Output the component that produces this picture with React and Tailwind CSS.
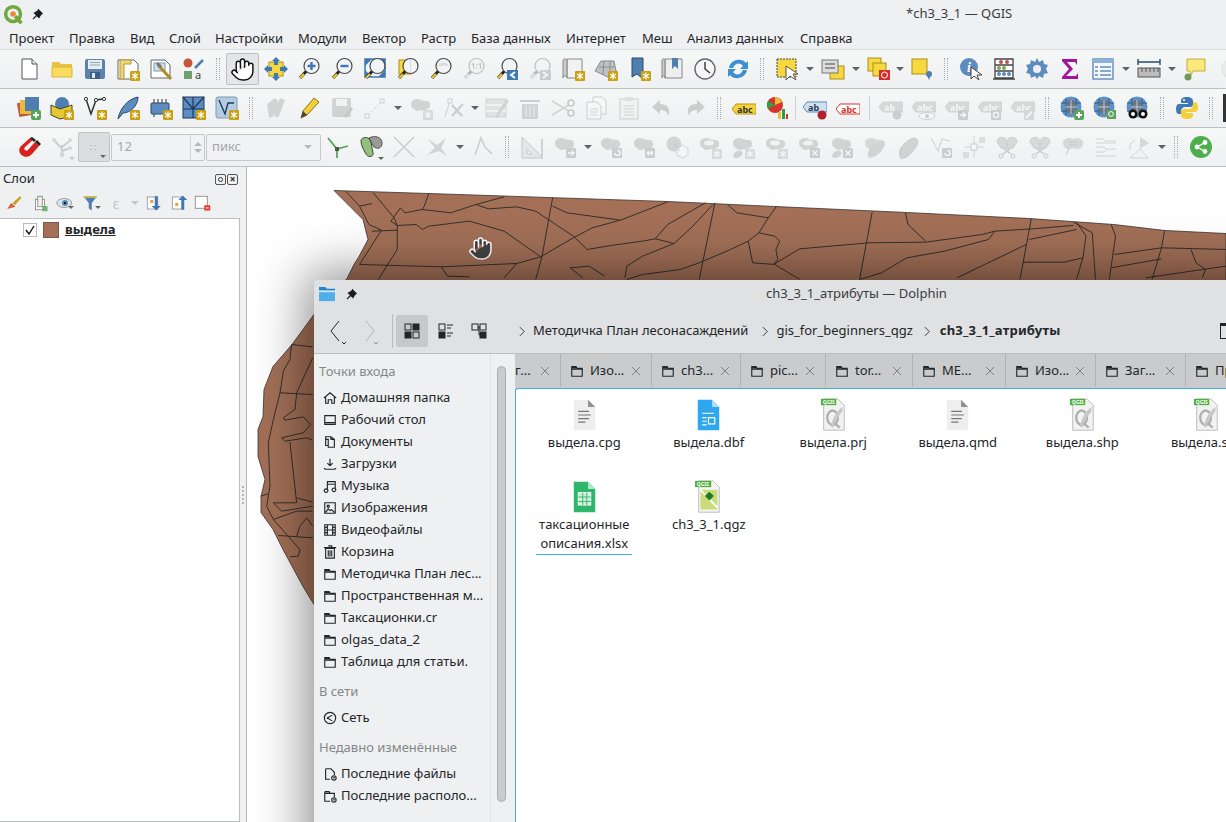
import { Hand } from "lucide-react";

// badges and parts shared by the toolbar icons
const Star = () => (
  <g>
    <rect x="14" y="14" width="10" height="10" rx="1" fill="#c9a012" />
    <path d="M19 15.5v7M16 17l6 4M22 17l-6 4" stroke="#fff" strokeWidth="1.2" />
  </g>
);
const Plus = () => (
  <g>
    <rect x="14" y="14" width="10" height="10" rx="2" fill="#5aa35a" />
    <path d="M19 16v6M16 19h6" stroke="#fff" strokeWidth="1.8" />
  </g>
);
const Lens = ({ children }) => (
  <g>
    <circle cx="14.5" cy="9" r="7.5" fill="#f1f3f4" stroke="#4a4a4a" strokeWidth="1.2" />
    {children}
    <path d="M9 14.5 3 21" stroke="#222" strokeWidth="3" />
    <path d="M7 17 3 21" stroke="#f5c92e" strokeWidth="2.2" />
  </g>
);
const Blob = ({ children, fill = "#8a8a8a" }) => (
  <g>
    <path d="M2 8c0-5 7-6 10-4s8-1 9 4-4 6-7 6-6 2-8 0-4-2-4-6z" fill={fill} />
    {children}
  </g>
);
const Box = ({ d }) => (
  <g>
    <rect x="13" y="13" width="10" height="10" rx="1" fill="#777" />
    <path d={d} stroke="#fff" strokeWidth="1.4" fill="none" />
  </g>
);
const Globe = ({ children }) => (
  <g>
    <circle cx="11" cy="11" r="10.5" fill="#5d93c9" />
    <path d="M1 7h20M1 15h20M6 2v18M16 2v18" stroke="#2a4f78" strokeWidth="0.8" />
    <ellipse cx="11" cy="11" rx="6" ry="7.5" fill="#6d7278" opacity="0.75" />
    <path d="M5 11h12M11 4v14" stroke="#d7dde2" strokeWidth="0.8" />
    {children}
  </g>
);
const Abc = ({ fill = "#f5d33c", stroke = "#b99c10", color = "#333", text = "abc" }) => (
  <g>
    <path d="M0 9 4 4h20v10H4z" fill={fill} stroke={stroke} />
    <text x="5" y="12.5" fontSize="9" fontWeight="700" fill={color} fontFamily="Noto Sans, sans-serif">
      {text}
    </text>
  </g>
);

const icons = {
  doc: (
    <g>
      <path d="M5 2h10l5 5v15H5z" fill="#fff" stroke="#555" />
      <path d="M15 2v5h5" fill="#eee" stroke="#555" />
    </g>
  ),
  open: (
    <g>
      <path d="M2 5h7l2 2h11v13H2z" fill="#e9c13e" />
      <path d="M2 10h20v10H2z" fill="#fbdc5e" stroke="#d7b43c" />
    </g>
  ),
  save: (
    <g>
      <rect x="2" y="2" width="20" height="20" rx="2" fill="#5b83ad" />
      <rect x="5" y="3" width="14" height="9" fill="#e9edf1" />
      <path d="M7 5.5h10M7 8h10" stroke="#8aa" />
      <rect x="7" y="15" width="10" height="7" fill="#3c5f85" />
      <rect x="9" y="16" width="3" height="5" fill="#dfe6ee" />
    </g>
  ),
  layout: (
    <g>
      <path d="M2 3h16l4 4v15H2z" fill="#fff" stroke="#666" />
      <path d="M4 3h11v4H8v15H4z" fill="#efd673" stroke="#b39b3c" />
      <Star />
    </g>
  ),
  prefs: (
    <g>
      <path d="M2 3h14l5 5v13H2z" fill="#fff" stroke="#666" />
      <rect x="5" y="6" width="11" height="8" fill="#cfe0ee" stroke="#7b9ab5" />
      <path d="M9 8l13 14" stroke="#b08d2b" strokeWidth="3" />
      <path d="M8 6l4 4" stroke="#777" strokeWidth="3" />
    </g>
  ),
  styles: (
    <g>
      <circle cx="6" cy="6" r="4.5" fill="#c9543a" />
      <path d="M13 11 21 3" stroke="#4f7fb0" strokeWidth="2.5" />
      <rect x="2" y="14" width="8" height="8" fill="#6fa06f" />
      <text x="13" y="22" fontSize="11" fill="#444" fontFamily="Noto Sans, sans-serif">a</text>
    </g>
  ),
  pan: (
    <g>
      <rect x="5" y="5" width="14" height="14" fill="#f7d83e" stroke="#a88f1a" />
      <path d="M12 0l4 4h-8zM12 24l4-4H8zM0 12l4-4v8zM24 12l-4-4v8z" fill="#3f78b5" />
      <path d="M10 4h4v4h-4zM10 16h4v4h-4zM4 10h4v4H4zM16 10h4v4h-4z" fill="#3f78b5" />
    </g>
  ),
  zin: <Lens><path d="M14.5 5v8M10.5 9h8" stroke="#3f78b5" strokeWidth="2.4" /></Lens>,
  zout: <Lens><path d="M10.5 9h8" stroke="#3f78b5" strokeWidth="2.4" /></Lens>,
  zfull: (
    <g>
      <path d="M2 2h7L2 9zM22 2h-7l7 7zM22 20h-7l7-7zM2 20h7l-7-7z" fill="#3f78b5" />
      <path d="M2 2h20v18H2z" fill="none" stroke="#3f78b5" strokeWidth="1.5" />
      <Lens />
    </g>
  ),
  zsel: (
    <g>
      <rect x="3" y="3" width="12" height="14" fill="#f7d83e" stroke="#a88f1a" />
      <Lens><path d="M14.5 2v14" stroke="#ddd" /></Lens>
    </g>
  ),
  zlayer: <Lens><path d="M9 9a6 6 0 0 1 11 0" fill="#ddd" /></Lens>,
  z1: (
    <Lens>
      <text x="9" y="12" fontSize="8" fontWeight="700" fill="#555" fontFamily="Noto Sans, sans-serif">1:1</text>
    </Lens>
  ),
  zlast: (
    <g>
      <Lens />
      <rect x="12" y="13" width="11" height="10" fill="#3f78b5" />
      <path d="M20 15l-4 3 4 3" stroke="#fff" strokeWidth="2" fill="none" />
    </g>
  ),
  znext: (
    <g>
      <Lens />
      <rect x="12" y="13" width="11" height="10" fill="#777" />
      <path d="M15 15l4 3-4 3" stroke="#fff" strokeWidth="2" fill="none" />
    </g>
  ),
  newmap: (
    <g>
      <path d="M6 2h15v19H6z" fill="#f2f2f2" stroke="#888" />
      <path d="M2 4c0-3 4-3 4 0v17c0-3-4-3-4 0z" fill="#ccc" stroke="#888" />
      <Star />
    </g>
  ),
  new3d: (
    <g>
      <path d="M1 14 7 4h13l2 10-8 6z" fill="#bfc2c4" stroke="#888" />
      <path d="M5 10h15M10 4l-1 13M16 4v13" stroke="#8c8c8c" />
      <Star />
    </g>
  ),
  bmknew: (
    <g>
      <path d="M5 1h11v21l-6-5-5 3z" fill="#4f7fb0" stroke="#2b4a6b" />
      <Star />
    </g>
  ),
  bmks: (
    <g>
      <path d="M5 2h17v19H5z" fill="#eee" stroke="#888" />
      <path d="M2 4c0-3 3-3 3 0v17c0-3-3-3-3 0z" fill="#ccc" stroke="#888" />
      <path d="M12 1h6v11l-3-3-3 3z" fill="#4f7fb0" />
    </g>
  ),
  clock: (
    <g>
      <circle cx="12" cy="12" r="10" fill="#f6f6f6" stroke="#667" strokeWidth="1.4" />
      <path d="M12 5v7l5 4" stroke="#333" strokeWidth="1.4" fill="none" />
    </g>
  ),
  refresh: (
    <g>
      <path d="M3 11C4 3 15 0 20 6l2-2v8h-8l3-3c-3-4-8-3-10 2z" fill="#3f8fd0" />
      <path d="M21 13c-1 8-12 11-17 5l-2 2v-8h8l-3 3c3 4 8 3 10-2z" fill="#3f8fd0" />
    </g>
  ),
  select: (
    <g>
      <rect x="2" y="2" width="19" height="18" fill="#f7d83e" stroke="#444" strokeDasharray="2 1" />
      <path d="M11 9v14l4-4 6 4-3-6h5z" fill="#fff" stroke="#555" />
    </g>
  ),
  form: (
    <g>
      <rect x="9" y="9" width="14" height="13" fill="#f7d83e" stroke="#a88f1a" />
      <rect x="1" y="3" width="16" height="13" fill="#ddd" stroke="#777" />
      <path d="M4 7h10M4 11h10" stroke="#777" strokeWidth="1.5" />
    </g>
  ),
  deselect: (
    <g>
      <rect x="1" y="1" width="13" height="13" fill="#f7d83e" stroke="#a88f1a" />
      <rect x="6" y="6" width="13" height="13" fill="#f7d83e" stroke="#a88f1a" />
      <rect x="12" y="13" width="11" height="10" fill="#d42f2f" />
      <circle cx="17.5" cy="18" r="3" fill="none" stroke="#fff" />
    </g>
  ),
  selloc: (
    <g>
      <rect x="2" y="2" width="15" height="15" fill="#f7d83e" stroke="#a88f1a" />
      <circle cx="19" cy="17" r="3" fill="#4f7fb0" />
      <path d="M17 18l2 5 2-5z" fill="#4f7fb0" />
    </g>
  ),
  identify: (
    <g>
      <circle cx="10" cy="10" r="9" fill="#5d8cc0" />
      <text x="8" y="15" fontSize="14" fontWeight="700" fontStyle="italic" fill="#fff" fontFamily="Liberation Serif, serif">i</text>
      <path d="M12 10v12l3-3 5 4-2-5h5z" fill="#fff" stroke="#444" />
    </g>
  ),
  abacus: (
    <g>
      <path d="M3 2h18v19H3zM1 22h22M3 8h18M3 14h18" stroke="#444" strokeWidth="1.3" fill="#fff" />
      <g fill="#c0504d"><circle cx="9" cy="5" r="2" /><circle cx="15" cy="5" r="2" /></g>
      <g fill="#76a855"><circle cx="7" cy="11" r="2" /><circle cx="12" cy="11" r="2" /></g>
      <g fill="#5d8cc0"><circle cx="7" cy="17" r="2" /><circle cx="12" cy="17" r="2" /><circle cx="17" cy="17" r="2" /></g>
    </g>
  ),
  gear: (
    <g>
      <path d="M12 1l2 4 4-2 1 4 4 1-2 4 2 4-4 1-1 4-4-2-2 3-2-3-4 2-1-4-4-1 2-4-2-4 4-1 1-4 4 2z" fill="#5d8cc0" />
      <circle cx="12" cy="12" r="4" fill="#eef1f3" />
    </g>
  ),
  sigma: <path d="M4 2h15v6l-2-3H9l6 7-7 7h10l2-3v6H4v-2l7-8-7-8z" fill="#a0169a" />,
  table: (
    <g>
      <rect x="2" y="2" width="20" height="20" fill="#f4f8fc" stroke="#5d8cc0" strokeWidth="1.4" />
      <rect x="2" y="2" width="20" height="4" fill="#8db2d8" />
      <path d="M4 10h3M9 10h11M4 14h3M9 14h11M4 18h3M9 18h11" stroke="#5d8cc0" strokeWidth="1.5" />
    </g>
  ),
  ruler: (
    <g>
      <path d="M1 5h22M1 2v6M23 2v6" stroke="#2b4a6b" strokeWidth="1.4" />
      <rect x="1" y="11" width="22" height="9" fill="#bcbcbc" stroke="#555" />
      <path d="M5 11v4M9 11v4M13 11v4M17 11v4M21 11v4" stroke="#555" />
    </g>
  ),
  tip: (
    <g>
      <path d="M4 2h18v12H10l-2 4-1-4H4z" fill="#fbe97c" stroke="#c2ad3a" />
      <circle cx="5" cy="20" r="3.5" fill="#6f9a5a" />
    </g>
  ),
  hidden: (
    <g>
      <circle cx="16" cy="12" r="10" fill="#ddd" stroke="#aaa" />
      <path d="M13 8l7 4-7 4z" fill="#aaa" />
    </g>
  ),
  addlay: (
    <g>
      <rect x="1" y="6" width="14" height="14" fill="#c05a3a" transform="rotate(-10 8 13)" />
      <rect x="3" y="4" width="14" height="14" fill="#e8b93a" />
      <rect x="8" y="1" width="14" height="14" fill="#4f7fb0" />
      <Plus />
    </g>
  ),
  gpkg: (
    <g>
      <circle cx="12" cy="8" r="7" fill="#4f7fb0" />
      <path d="M1 9l9 4 12-4v11l-12 3-9-4z" fill="#e6c72f" stroke="#444" />
      <Star />
    </g>
  ),
  vert: (
    <g>
      <path d="M3 3l5 15 5-14 7-1" fill="none" stroke="#333" strokeWidth="1.5" />
      <g fill="#fff" stroke="#333"><circle cx="3" cy="3" r="1.6" /><circle cx="13" cy="4" r="1.6" /><circle cx="21" cy="3" r="1.6" /></g>
      <Star />
    </g>
  ),
  feather: (
    <g>
      <path d="M2 23C4 12 12 3 22 1c0 9-8 16-15 16z" fill="#5d8cc0" stroke="#2b4a6b" />
      <Star />
    </g>
  ),
  chip: (
    <g>
      <rect x="2" y="7" width="18" height="11" rx="1" fill="#5d8cc0" stroke="#2b4a6b" />
      <path d="M5 3v4M9 3v4M13 3v4M17 3v4M5 18v3" stroke="#333" />
      <Star />
    </g>
  ),
  mosaic: (
    <g>
      <rect x="1" y="1" width="21" height="21" fill="#5d8cc0" stroke="#1d3a5c" />
      <path d="M1 13h21M11 1v21M1 1l10 12M22 1 11 13" stroke="#1d3a5c" strokeWidth="1.2" />
      <Star />
    </g>
  ),
  vedit: (
    <g>
      <rect x="1" y="1" width="21" height="21" rx="2" fill="#b5cde2" stroke="#7b9ab5" />
      <path d="M4 4l6 14 3-11 6 0" fill="none" stroke="#1d3a5c" strokeWidth="1.4" />
      <Star />
    </g>
  ),
  pencils: <path d="M5 22 3 8l8-6 3 3-4 15zM12 22l-2-6 6-14 5 2-6 16z" fill="#8a8a8a" />,
  pencil: (
    <g>
      <path d="M4 22l2-7L17 2l5 4L10 19z" fill="#f5cf3a" stroke="#8a7318" />
      <path d="M4 22l2-7 4 4z" fill="#444" />
    </g>
  ),
  savelay: (
    <g>
      <rect x="2" y="2" width="19" height="19" rx="2" fill="#888" />
      <rect x="6" y="3" width="11" height="7" fill="#eee" />
      <path d="M14 20l7-9 2 2-7 9z" fill="#666" />
    </g>
  ),
  digit: (
    <g>
      <path d="M4 20 19 5" stroke="#888" strokeDasharray="3 2" />
      <rect x="2" y="18" width="4" height="4" fill="#fff" stroke="#777" />
      <rect x="17" y="3" width="4" height="4" fill="#fff" stroke="#777" />
    </g>
  ),
  polystar: <Blob><Star /></Blob>,
  vtool: (
    <g>
      <path d="M3 21 8 5" stroke="#777" />
      <rect x="6" y="3" width="4" height="4" fill="#fff" stroke="#777" />
      <path d="M10 20 21 8M10 9l10 11" stroke="#777" strokeWidth="2.4" />
    </g>
  ),
  tedit: (
    <g>
      <rect x="1" y="3" width="20" height="18" fill="#bbb" stroke="#888" />
      <path d="M1 9h20M1 15h20" stroke="#fff" strokeWidth="1.5" />
      <path d="M10 21 21 3l3 2-12 17z" fill="#888" />
    </g>
  ),
  trash: (
    <g>
      <path d="M4 8h16v15H4z" fill="#888" />
      <path d="M2 4h20v2H2z" fill="#777" />
      <path d="M8 10v11M12 10v11M16 10v11" stroke="#ddd" />
    </g>
  ),
  scissors: (
    <g>
      <path d="M1 5l17 10M1 19 18 9" stroke="#888" strokeWidth="1.6" />
      <circle cx="20" cy="7" r="3" fill="none" stroke="#666" strokeWidth="1.6" />
      <circle cx="20" cy="17" r="3" fill="none" stroke="#666" strokeWidth="1.6" />
    </g>
  ),
  copy: (
    <g>
      <path d="M9 1h9l4 4v13H9z" fill="#fff" stroke="#777" />
      <path d="M3 6h10l4 4v13H3z" fill="#fff" stroke="#777" />
      <path d="M6 13h8M6 16h8M6 19h8" stroke="#888" />
    </g>
  ),
  paste: (
    <g>
      <rect x="3" y="3" width="18" height="20" fill="#eee" stroke="#777" />
      <rect x="8" y="1" width="8" height="4" fill="#aaa" />
      <path d="M7 10h10M7 13h10M7 16h10M7 19h10" stroke="#888" />
    </g>
  ),
  undo: <path d="M10 4 2 11l8 7v-4c5 0 7 2 8 6 3-7 0-12-8-12z" fill="#777" />,
  redo: <path d="M14 4l8 7-8 7v-4c-5 0-7 2-8 6-3-7 0-12 8-12z" fill="#777" />,
  abcy: <g transform="translate(0 4)"><Abc /></g>,
  pie: (
    <g>
      <circle cx="10" cy="9" r="8" fill="#d8342c" />
      <path d="M10 9V1a8 8 0 0 1 7 5z" fill="#e9c13e" />
      <path d="M10 9 3 5a8 8 0 0 0 0 8z" fill="#2f9e44" />
      <rect x="13" y="16" width="3" height="7" fill="#e9c13e" />
      <rect x="17" y="13" width="3" height="10" fill="#2f9e44" />
      <rect x="21" y="18" width="2" height="5" fill="#d8342c" />
    </g>
  ),
  abpin: (
    <g transform="translate(0 2)">
      <Abc fill="#cfe0ee" stroke="#5d8cc0" color="#2b3e55" text="ab" />
      <circle cx="19" cy="17" r="4.5" fill="#b3202a" />
    </g>
  ),
  abcred: <g transform="translate(0 4)"><Abc fill="#fff" stroke="#d8342c" color="#d8342c" /></g>,
  abpingr: (
    <g transform="translate(0 2)">
      <Abc fill="#999" stroke="#888" color="#fff" text="ab" />
      <circle cx="18" cy="17" r="4.5" fill="#777" />
    </g>
  ),
  abceye: (
    <g transform="translate(0 2)">
      <Abc fill="#999" stroke="#888" color="#fff" />
      <ellipse cx="15" cy="18" rx="8" ry="3.5" fill="#fff" stroke="#777" />
      <circle cx="15" cy="18" r="2" fill="#777" />
    </g>
  ),
  abcarrow: (
    <g transform="translate(0 2)">
      <Abc fill="#999" stroke="#888" color="#fff" />
      <rect x="13" y="12" width="10" height="10" rx="1" fill="#777" />
      <path d="M15 17h5M18 14.5l2.5 2.5-2.5 2.5" stroke="#fff" strokeWidth="1.6" fill="none" />
    </g>
  ),
  abcrot: (
    <g transform="translate(0 2)">
      <Abc fill="#999" stroke="#888" color="#fff" />
      <rect x="13" y="12" width="10" height="10" rx="1" fill="#777" />
      <circle cx="18" cy="17" r="2.6" stroke="#fff" strokeWidth="1.4" fill="none" />
    </g>
  ),
  abcedit: (
    <g transform="translate(0 2)">
      <Abc fill="#999" stroke="#888" color="#fff" />
      <rect x="13" y="12" width="10" height="10" rx="1" fill="#999" />
      <path d="M15 20l6-6" stroke="#fff" strokeWidth="1.8" />
    </g>
  ),
  globeadd: <Globe><Plus /></Globe>,
  globesearch: (
    <Globe>
      <rect x="14" y="14" width="9" height="9" fill="#5aa35a" />
      <circle cx="18" cy="18" r="2.4" fill="none" stroke="#fff" />
    </Globe>
  ),
  globebino: (
    <Globe>
      <circle cx="7" cy="18" r="4.5" fill="#111" />
      <circle cx="17" cy="18" r="4.5" fill="#111" />
      <circle cx="7" cy="18" r="2" fill="#fff" />
      <circle cx="17" cy="18" r="2" fill="#fff" />
    </Globe>
  ),
  python: (
    <g>
      <path d="M12 1C7 1 6 3 6 5v2h7v1H4c-2 0-3 2-3 5s1 5 3 5h2v-3c0-2 2-4 4-4h5c2 0 3-1 3-3V5c0-2-2-4-6-4z" fill="#3f78b5" />
      <path d="M12 23c5 0 6-2 6-4v-2h-7v-1h9c2 0 3-2 3-5s-1-5-3-5h-2v3c0 2-2 4-4 4h-5c-2 0-3 1-3 3v3c0 2 2 4 6 4z" fill="#f5cf3a" />
      <circle cx="9" cy="4" r="1" fill="#fff" />
    </g>
  ),
  magnet: (
    <g>
      <path d="M13 3 4 11c-3 3-2 8 2 10s7 0 9-2l7-8-4-4-7 8c-2 2-5-1-3-3l9-8z" fill="#d8201f" />
      <path d="M13 3l4 4 2-2-4-3zM18 7l4 4 2-2-4-4z" fill="#222" />
    </g>
  ),
  vtree: (
    <g>
      <path d="M12 20V10M12 14 4 5M12 12l9-7M12 16l8-3" stroke="#777" strokeWidth="2" />
      <circle cx="12" cy="20" r="2.4" fill="#999" />
      <circle cx="4" cy="5" r="2" fill="#999" />
      <circle cx="20" cy="5" r="2" fill="#999" />
      <circle cx="20" cy="13" r="2" fill="#999" />
    </g>
  ),
  trim: (
    <g>
      <path d="M2 3l9 11 11-3" stroke="#5aa35a" strokeWidth="1.8" fill="none" />
      <path d="M11 14v9" stroke="#5aa35a" strokeWidth="1.8" />
      <rect x="9" y="12" width="4" height="4" fill="#555" />
    </g>
  ),
  overlap: (
    <g>
      <path d="M10 3c6-3 13-1 13 5s-5 6-8 4z" fill="#9a9a9a" stroke="#555" />
      <path d="M2 6c0-4 7-5 9-1s2 9 3 13-5 5-7 1-5-8-5-13z" fill="#93c07a" stroke="#444" />
    </g>
  ),
  x: <path d="M2 2l20 20M22 2 2 22" stroke="#777" strokeWidth="1.6" />,
  starx: <path d="M2 20 10 13 3 4l9 6 9-7-5 10 6 8-8-5z" fill="#888" />,
  linked: <path d="M4 20 10 3l4 9 7 7" fill="none" stroke="#777" strokeWidth="1.6" />,
  triangle: (
    <g>
      <path d="M2 2v21h21z" fill="#ccc" stroke="#666" />
      <path d="M7 14v5h5z" fill="#fff" stroke="#666" />
      <path d="M22 4v20" stroke="#888" strokeWidth="2" />
    </g>
  ),
  barrow: <Blob><Box d="M15 18h6M18.5 15.5 21 18l-2.5 2.5" /></Blob>,
  brot: <Blob><Box d="M16 18a2.5 2.5 0 1 0 2.5-2.5" /></Blob>,
  bscale: <Blob><Box d="M15 18h6M15 18l2-2M15 18l2 2M21 18l-2-2M21 18l-2 2" /></Blob>,
  boff: (
    <g>
      <circle cx="9" cy="9" r="7.5" fill="#8a8a8a" />
      <path d="M12 14l6-4 5 4v6l-5 3-6-3z" fill="#fff" stroke="#888" />
      <path d="M9 9l6 7" stroke="#666" />
    </g>
  ),
  bstar: <Blob><ellipse cx="11" cy="8" rx="5" ry="2.5" fill="#eee" /><Star /></Blob>,
  bstar2: (
    <Blob>
      <path d="M2 22c0-4 4-7 8-6s0 7-5 7z" fill="#8a8a8a" />
      <Star />
    </Blob>
  ),
  bdel: (
    <Blob>
      <ellipse cx="11" cy="8" rx="5" ry="2.5" fill="#eee" />
      <Box d="M15.5 15.5l5 5M20.5 15.5l-5 5" />
    </Blob>
  ),
  bdel2: (
    <Blob>
      <path d="M2 22c0-4 4-7 8-6s0 7-5 7z" fill="#8a8a8a" />
      <Box d="M15.5 15.5l5 5M20.5 15.5l-5 5" />
    </Blob>
  ),
  bfill: <Blob fill="#999"><path d="M5 21C3 17 9 11 14 8s8-3 8 1-7 12-12 13-4 1-5-1z" fill="#8a8a8a" /></Blob>,
  bring: <path d="M4 21C1 15 9 7 15 4s8 2 6 6-8 12-13 13-3 0-4-2z" fill="#8a8a8a" stroke="#666" />,
  vswap: (
    <g>
      <path d="M2 3l7 13 4-12 8 2" fill="none" stroke="#777" />
      <Box d="M16 18a2.5 2.5 0 1 0 2.5-2.5" />
    </g>
  ),
  tgrid: (
    <g>
      <path d="M12 1v22M2 12h20" stroke="#888" />
      <rect x="9" y="9" width="6" height="6" fill="#fff" stroke="#777" />
      <rect x="17" y="2" width="6" height="6" fill="#aaa" />
      <rect x="1" y="17" width="6" height="6" fill="#aaa" />
    </g>
  ),
  cut1: (
    <g>
      <path d="M2 7c0-5 6-6 9-3l1 10L6 13z" fill="#999" stroke="#777" />
      <path d="M22 7c0-5-6-6-9-3l-1 10 6-1z" fill="#999" stroke="#777" />
      <path d="M9 14l7 5M15 14l-7 5" stroke="#666" strokeWidth="1.4" />
      <circle cx="6" cy="21" r="2" fill="none" stroke="#666" />
      <circle cx="18" cy="21" r="2" fill="none" stroke="#666" />
    </g>
  ),
  merge: (
    <g>
      <path d="M2 8c0-5 7-6 10-4v9c-3 2-10 2-10-5z" fill="#999" />
      <path d="M22 8c0-5-7-6-10-4v9c3 2 10 2 10-5z" fill="#999" />
      <path d="M8 7h8M8 10h8M8 13 5 20" stroke="#666" />
    </g>
  ),
  lines: <path d="M2 4h7l2 2h11M2 8h20M2 12h8l2 2h10M2 17h8l2-2M2 21h20" stroke="#888" fill="none" />,
  rotate: (
    <g>
      <path d="M13 2v12l9-6z" fill="#999" />
      <path d="M3 23h18l-8-9zM8 5a9 9 0 0 0-5 10" stroke="#888" fill="none" />
    </g>
  ),
  share: (
    <g>
      <circle cx="12" cy="12" r="11" fill="#4cae4c" />
      <circle cx="8" cy="12" r="2.4" fill="#fff" />
      <circle cx="16" cy="7.5" r="2.4" fill="#fff" />
      <circle cx="16" cy="16.5" r="2.4" fill="#fff" />
      <path d="M8 12l8-4.5M8 12l8 4.5" stroke="#fff" strokeWidth="1.4" />
    </g>
  ),
};

// H handle, A arrow, a narrow arrow, S / s separators, E the cut-off toolbar at the edge
const row1 = "doc open save layout prefs styles H #hand pan zin zout zfull zsel zlayer *z1 zlast *znext newmap new3d bmknew bmks clock refresh H select A form A deselect a selloc H identify abacus gear sigma table A ruler A tip *hidden".split(" ");
const row2 = "addlay gpkg vert feather chip mosaic vedit H *pencils pencil *savelay *digit A *polystar *vtool a *tedit *trash *scissors *copy *paste *undo *redo H abcy pie s abpin abcred S *abpingr *abceye *abcarrow *abcrot *abcedit H globeadd globesearch globebino H python H E".split(" ");
const row3b = "*x *starx A *linked H *triangle *barrow A *brot *bscale *boff *bstar *bstar2 *bstar *bdel *bdel2 *bfill *bring *vswap *tgrid *cut1 *cut1 *merge *lines *rotate A H share".split(" ");

const Icon = ({ name, size = "h-6 w-6" }) => (
  <svg viewBox="0 0 24 24" className={size}>{icons[name]}</svg>
);

const Handle = () => (
  <div className="flex w-4 shrink-0 justify-center">
    <div className="h-[22px] w-[4px] border-x border-dotted border-[#a6a8aa]" />
  </div>
);

const Arrow = ({ off, narrow }) => (
  <div className={`flex shrink-0 justify-center ${narrow ? "w-[10px]" : "w-[13px]"}`}>
    <div className={`h-0 w-0 border-x-[4px] border-t-[4px] border-x-transparent ${off ? "border-t-[#c4c6c8]" : "border-t-[#5f6265]"}`} />
  </div>
);

const Corner = () => (
  <div className="absolute bottom-[3px] right-[3px] h-0 w-0 border-x-[3px] border-t-[3px] border-x-transparent border-t-[#666]" />
);

const ToolItem = ({ item, corner }) => {
  if (item === "H") return <Handle />;
  if (item === "A") return <Arrow />;
  if (item === "a") return <Arrow narrow />;
  if (item === "E") return <div className="ml-[4px] h-[28px] w-[4px] shrink-0 bg-[#333]" />;
  if (item === "S" || item === "s") return (
    <div className={`flex shrink-0 justify-center ${item === "S" ? "w-[10px]" : "w-[5px]"}`}>
      <div className="h-[24px] w-px bg-[#cfd1d3]" />
    </div>
  );
  if (item === "#hand") return (
    <div className="flex h-[32px] w-[33px] shrink-0 items-center justify-center rounded-[2px] border border-[#bcbec0] bg-[#e4e5e6]">
      <Hand size={25} fill="#fff" stroke="#111" strokeWidth={1.4} />
    </div>
  );
  const off = item.startsWith("*");
  const name = off ? item.slice(1) : item;
  return (
    <div className={`relative flex h-[32px] w-[33px] shrink-0 items-center justify-center ${off ? "opacity-30 grayscale" : ""}`}>
      <Icon name={name} />
      {corner && <Corner />}
    </div>
  );
};

const ToolRow = ({ children }) => (
  <div className="flex h-[39px] shrink-0 items-center border-b border-[#bdbfc1] bg-gradient-to-b from-[#f6f7f7] to-[#eff0f1] pl-[12px]">
    {children}
  </div>
);

const menu = [
  ["Проект", "w-[60px]"], ["Правка", "w-[61px]"], ["Вид", "w-[39px]"], ["Слой", "w-[46px]"],
  ["Настройки", "w-[83px]"], ["Модули", "w-[64px]"], ["Вектор", "w-[59px]"], ["Растр", "w-[50px]"],
  ["База данных", "w-[95px]"], ["Интернет", "w-[76px]"], ["Меш", "w-[45px]"],
  ["Анализ данных", "w-[113px]"], ["Справка", "w-[60px]"],
];

const QgisLogo = () => (
  <svg viewBox="0 0 24 24" className="h-[21px] w-[21px]">
    <circle cx="11.5" cy="11.5" r="8.5" fill="none" stroke="#6fa83f" strokeWidth="4" />
    <path d="M14 14l7 8" stroke="#6fa83f" strokeWidth="4" />
    <circle cx="11.5" cy="11.5" r="3.2" fill="#e98a3a" />
  </svg>
);

const Pin = () => (
  <svg viewBox="0 0 16 16" className="h-[13px] w-[13px]">
    <path d="M9 1l6 6-2 1-2 3-1 2-3-3-4 4-1-1 4-4-3-3 2-1 3-2z" fill="#1b1e20" />
  </svg>
);

const LayerTool = ({ d, w, corner }) => (
  <div className={`relative flex shrink-0 justify-center ${w}`}>
    <svg viewBox="0 0 24 24" className="h-[18px] w-[18px]">{d}</svg>
    {corner && <Corner />}
  </div>
);

const LayersPanel = () => (
  <div className="flex w-[240px] shrink-0 flex-col bg-[#eff0f1]">
    <div className="flex h-[21px] items-center justify-between pl-[3px] pr-[1px] pt-[3px] text-[13px]">
      <span>Слои</span>
      <div className="flex gap-[1px] pr-[1px]">
        <span className="flex h-[11px] w-[11px] items-center justify-center rounded-[2px] border border-[#555]">
          <span className="h-[5px] w-[5px] rounded-full border border-[#333]" />
        </span>
        <span className="flex h-[11px] w-[11px] items-center justify-center rounded-[2px] border border-[#555] text-[10px] font-bold leading-none">×</span>
      </div>
    </div>
    <div className="flex h-[30px] items-center">
      <LayerTool w="w-[27px]" d={<g><path d="M3 20l5-8 6 5z" fill="#d95f3a" /><path d="M10 12l10-9 2 2-9 10z" fill="#c9a020" /></g>} />
      <LayerTool w="w-[25px]" d={<g><rect x="6" y="7" width="12" height="14" fill="#fff" stroke="#777" /><rect x="9" y="3" width="6" height="14" fill="#eee" stroke="#777" /><rect x="15" y="16" width="7" height="7" fill="#6fb36f" /></g>} />
      <LayerTool w="w-[25px]" corner d={<g><ellipse cx="11" cy="12" rx="10" ry="6" fill="#dbe3ea" stroke="#888" /><circle cx="12" cy="12" r="4" fill="#5d8cc0" /><circle cx="12" cy="12" r="1.6" fill="#222" /></g>} />
      <LayerTool w="w-[27px]" corner d={<g><path d="M2 3h18l-7 9v10l-4-3v-7z" fill="#4f7fb0" /><path d="M2 3h18v2H2z" fill="#e9c13e" /></g>} />
      <div className="flex w-[24px] justify-center opacity-35 grayscale">
        <span className="text-[15px] leading-none text-[#777]">ε</span>
      </div>
      <Arrow off />
      <LayerTool w="w-[25px]" d={<g><rect x="3" y="4" width="14" height="16" fill="#fff" stroke="#888" /><rect x="7" y="8" width="4" height="4" fill="#e9a13e" /><path d="M17 3v13h4l-6 6-6-6h4V3z" fill="#3f78b5" /></g>} />
      <LayerTool w="w-[25px]" d={<g><rect x="3" y="4" width="14" height="16" fill="#fff" stroke="#888" /><rect x="7" y="12" width="4" height="4" fill="#e9a13e" /><path d="M15 21V8h-4l6-6 6 6h-4v13z" fill="#3f78b5" /></g>} />
      <LayerTool w="w-[22px]" d={<g><rect x="3" y="3" width="16" height="16" fill="#fff" stroke="#777" /><rect x="15" y="15" width="8" height="7" fill="#e33" /><path d="M17 18.5h4" stroke="#fff" strokeWidth="1.4" /></g>} />
    </div>
    <div className="flex-1 border-y border-r border-[#bcbec0] bg-white">
      <div className="flex h-[22px] items-center pl-[23px]">
        <span className="flex h-[14px] w-[14px] items-center justify-center border border-[#b8babc] bg-white">
          <svg viewBox="0 0 12 12" className="h-[12px] w-[12px]">
            <path d="M2 6l3 4 5-8" fill="none" stroke="#111" strokeWidth="1.4" />
          </svg>
        </span>
        <span className="ml-[6px] h-[16px] w-[16px] border border-[#7d5a47] bg-[#a37057]" />
        <span className="ml-[6px] text-[13px] font-bold underline">выдела</span>
      </div>
    </div>
  </div>
);

// outline of the parcels layer, in page coordinates
const outline = "334,191 429,194 668,202 775,207 907,213 1029,219 1114,225 1165,231 1226,234 1226,620 330,620 314,605 303,587 283,550 273,530 261,513 261,497 265,480 258,457 258,430 263,417 264,390 273,367 292,345 303,330 314,315 347,279 354,265 359,257 368,240 363,220 350,207";

const topLines = [
  "168,65 190,110 205,165 225,182 190,285",
  "212,70 245,145 250,168",
  "190,110 210,102",
  "300,72 293,110 290,120 262,130 255,115 240,155 250,168 280,165 290,180 300,170 365,155 420,185 478,262",
  "290,120 335,130 375,105 420,82",
  "375,105 395,118 440,112 470,125 490,150 530,200 552,240 590,228 640,215 660,208 690,222",
  "497,85 480,262 470,330",
  "497,110 520,130 605,152 680,97",
  "605,152 560,175 530,205 478,262 440,282 320,292 190,285",
  "250,168 250,240 220,330",
  "210,185 250,182",
  "740,100 680,165 660,208",
  "752,105 720,170 690,222 640,260 615,290 612,325",
  "755,100 730,330",
  "775,105 790,130 840,145 853,110",
  "840,145 825,190 850,200 858,215 852,240 855,270 848,285",
  "825,190 808,215 815,280 850,285 890,330",
  "808,215 780,240 730,280 700,300 640,315 615,330",
  "1005,128 985,330",
  "1058,130 1062,165 1090,215",
  "848,285 890,238 1000,220 1090,218 1180,195 1200,185 1260,178 1325,168",
  "1200,185 1190,210 1120,245 1060,265 1020,310 985,330",
  "1258,148 1240,330",
  "1330,158 1345,200 1340,265 1330,330",
  "1255,210 1330,180",
  "1325,158 1355,190 1360,330",
  "1250,225 1140,325",
  "1245,278 1310,278 1340,265",
  "1385,165 1392,200 1382,330",
  "1470,183 1465,235 1450,330",
  "1390,255 1465,235 1568,240",
  "1385,295 1465,268",
  "1512,240 1520,280 1535,300 1530,325",
  "1440,325 1530,300 1568,290",
  "525,295 555,290 580,320",
  "525,295 545,325",
  "320,292 330,320 365,322",
  "440,282 420,325",
];

const leftLines = [
  "155,45 218,52",
  "155,45 150,90 130,125 120,190 100,270 85,340 90,470 80,530 100,570 180,660 175,680 150,682",
  "120,190 218,195",
  "218,85 170,190 165,240 130,265 135,272 190,262 212,285 190,310 125,325 135,335 200,325 218,332",
  "150,338 170,520 100,520 125,545 218,530",
  "170,505 218,518",
  "62,500 85,493",
  "100,570 170,545 218,545",
  "170,620 180,590 200,565 218,590",
  "115,618 218,625",
];

const MapCanvas = () => (
  <div className="relative flex-1 overflow-hidden border-l border-[#b5b7b9] bg-white">
    <svg viewBox="247 168 979 654" className="h-full w-full">
      <polygon points={outline} fill="#a37057" stroke="#3a3230" strokeWidth="0.8" />
      <g transform="translate(240 170) scale(0.629 0.3333)" fill="none" stroke="#33302e">
        {topLines.map((p) => <polyline key={p} points={p} vectorEffect="non-scaling-stroke" strokeWidth="1" />)}
      </g>
      <g transform="translate(240 330) scale(0.3333)" fill="none" stroke="#33302e">
        {leftLines.map((p) => <polyline key={p} points={p} vectorEffect="non-scaling-stroke" strokeWidth="1" />)}
      </g>
    </svg>
    <div className="absolute left-[221px] top-[69px]">
      <Hand size={25} fill="#444" stroke="#fff" strokeWidth={1.5} />
    </div>
  </div>
);

const sideIcons = {
  home: <path d="M1 8 8 2l7 6M3 7v7h3v-4h4v4h3V7" />,
  desktop: <path d="M2 3h12v10H2zM2 11h12" />,
  docs: <path d="M3 2h6v3h4v9H6V5H3zM9 2l4 3M3 5v7h3" />,
  down: <path d="M8 2v8M5 7l3 3 3-3M1 13l2 1h10l2-1" />,
  music: <path d="M5 12V3h9v8M5 6h9M5 12a2 2 0 1 1-3 0 2 2 0 0 1 3 0zM14 11a2 2 0 1 1-3 0 2 2 0 0 1 3 0z" />,
  image: <path d="M2 2h12v12H2zM3 13l3-4 2 2 2-1 3 3M5 5h2v2H5z" />,
  film: <path d="M2 2h12v12H2zM5 2v12M11 2v12M5 8h6M2 5h3M2 8h3M2 11h3M11 5h3M11 8h3M11 11h3" />,
  trash: <path d="M3 4h10v11H3zM1 3h14M6 1h4v2M6 6v7M8 6v7M10 6v7" />,
  folder: <path d="M2 3h5l1 2h6v9H2zM2 6h12M2 4.5h5" />,
  net: <path d="M8 1.5a6.5 6.5 0 1 1 0 13 6.5 6.5 0 0 1 0-13zM5 8l5-3M5 8l5 3M5 7v2M10 4.5v1M10 10.5v1" />,
  recent: <path d="M3 2h6l4 4v3M3 2v12h5M12.5 10a2.5 2.5 0 1 1 0 5 2.5 2.5 0 0 1 0-5zM12.5 11v1.5h1" />,
  places: <path d="M2 3h5l1 2h5v4M2 3v11h6M12.5 10a2.5 2.5 0 1 1 0 5 2.5 2.5 0 0 1 0-5zM12.5 11v1.5h1M2 5h6" />,
};

const SideIcon = ({ name, size = "h-[14px] w-[14px]" }) => (
  <svg viewBox="0 0 16 16" className={`shrink-0 ${size}`} fill="none" stroke="#232629" strokeWidth="1.3">
    {sideIcons[name]}
  </svg>
);

const SideRow = ({ icon, label }) => (
  <div className="flex h-[22px] items-center pl-[9px]">
    <SideIcon name={icon} />
    <span className="ml-[4px] whitespace-nowrap text-[13px] text-[#232629]">{label}</span>
  </div>
);

const SideHead = ({ children, cls }) => (
  <div className={`pl-[5px] text-[13px] leading-[18px] text-[#85888a] ${cls}`}>{children}</div>
);

const Sidebar = () => (
  <div className="flex w-[201px] shrink-0 bg-[#eff0f1]">
    <div className="w-[177px] overflow-hidden border-r border-[#dfe1e3] pt-[8px]">
      <SideHead cls="mb-[7px]">Точки входа</SideHead>
      <SideRow icon="home" label="Домашняя папка" />
      <SideRow icon="desktop" label="Рабочий стол" />
      <SideRow icon="docs" label="Документы" />
      <SideRow icon="down" label="Загрузки" />
      <SideRow icon="music" label="Музыка" />
      <SideRow icon="image" label="Изображения" />
      <SideRow icon="film" label="Видеофайлы" />
      <SideRow icon="trash" label="Корзина" />
      <SideRow icon="folder" label="Методичка План лес..." />
      <SideRow icon="folder" label="Пространственная м..." />
      <SideRow icon="folder" label="Таксационки.cr" />
      <SideRow icon="folder" label="olgas_data_2" />
      <SideRow icon="folder" label="Таблица для статьи." />
      <SideHead cls="mb-[7px] mt-[9px]">В сети</SideHead>
      <SideRow icon="net" label="Сеть" />
      <SideHead cls="mb-[7px] mt-[9px]">Недавно изменённые</SideHead>
      <SideRow icon="recent" label="Последние файлы" />
      <SideRow icon="places" label="Последние располо..." />
      <SideHead cls="mt-[10px]">Поиск</SideHead>
    </div>
    <div className="pl-[6px] pt-[12px]">
      <div className="h-[436px] w-[9px] rounded-full border border-[#a9abad] bg-[#c9cbcd]" />
    </div>
  </div>
);

const tabs = [
  ["г...", "w-[46px]", false],
  ["Изо...", "w-[91px]", true],
  ["ch3...", "w-[89px]", true],
  ["pic...", "w-[85px]", true],
  ["tor...", "w-[87px]", true],
  ["МЕ...", "w-[93px]", true],
  ["Изо...", "w-[90px]", true],
  ["Заг...", "w-[90px]", true],
  ["Пр...", "w-[90px]", true],
];

const TabBar = () => (
  <div className="flex h-[34px] shrink-0 bg-[#c9cbcd] pb-[1px]">
    {tabs.map(([label, w, folder], i) => (
      <div key={i} className={`flex shrink-0 items-center justify-between border-r border-[#b0b2b4] pr-[10px] text-[13px] text-[#232629] ${w} ${folder ? "pl-[9px]" : "pl-0"}`}>
        <span className="flex items-center gap-[6px] whitespace-nowrap">
          {folder && <SideIcon name="folder" size="h-[14px] w-[14px]" />}
          {label}
        </span>
        <svg viewBox="0 0 10 10" className="h-[10px] w-[10px] shrink-0" stroke="#7f8183" strokeWidth="1">
          <path d="M1 1l8 8M9 1l-8 8" />
        </svg>
      </div>
    ))}
  </div>
);

const files = {
  text: (
    <g>
      <path d="M4 2h16l8 8v26H4z" fill="#eeeeee" />
      <path d="M20 2l8 8h-8z" fill="#8f9193" />
      <path d="M9 15h12M9 19h14M9 23h12M9 27h8" stroke="#777" strokeWidth="1.3" />
    </g>
  ),
  dbf: (
    <g>
      <path d="M4 2h16l8 8v26H4z" fill="#2fa7ee" />
      <path d="M20 2l8 8h-8z" fill="#b5def7" />
      <path d="M9 17h13M9 22h5M9 26h5M9 30h5" stroke="#fff" strokeWidth="1.3" />
      <rect x="16" y="22" width="7" height="7" fill="none" stroke="#fff" strokeWidth="1.3" />
    </g>
  ),
  // grey Q with a feather stroke over it, as on the QGIS document icons
  qgis: (
    <g>
      <path d="M5 1h16l7 7v28H5z" fill="#f2f2f2" stroke="#b9b9b9" />
      <rect x="2" y="1" width="17" height="7" fill="#4caf3d" />
      <text x="4" y="7" fontSize="5.5" fontWeight="700" fill="#fff" fontFamily="Noto Sans, sans-serif">QGIS</text>
      <ellipse cx="15" cy="22" rx="6" ry="8" fill="none" stroke="#b0b0b0" strokeWidth="2.6" />
      <path d="M26 10C20 14 15 22 13 32l3 1c2-6 6-14 10-18z" fill="#c8c8c8" />
      <path d="M17 28l6 5" stroke="#b0b0b0" strokeWidth="2.6" />
    </g>
  ),
  xlsx: (
    <g>
      <path d="M4 2h16l8 8v26H4z" fill="#2eb66a" />
      <path d="M20 2l8 8h-8z" fill="#b6e6c9" />
      <rect x="9" y="14" width="14" height="14" fill="#cfeedd" stroke="#fff" />
      <path d="M9 19h14M9 24h14M14 14v14M18.5 14v14" stroke="#2eb66a" />
    </g>
  ),
  qgz: (
    <g>
      <path d="M5 1h16l7 7v28H5z" fill="#f5f5f5" stroke="#b9b9b9" />
      <rect x="7" y="11" width="19" height="22" fill="#c9dc78" />
      <path d="M7 11l19 20" stroke="#fff" strokeWidth="2" />
      <path d="M17 13l5 5-5 5-5-5z" fill="#1f7a1f" />
      <rect x="1" y="1" width="18" height="7" fill="#4caf3d" />
      <text x="3" y="7" fontSize="5.5" fontWeight="700" fill="#fff" fontFamily="Noto Sans, sans-serif">QGIS</text>
    </g>
  ),
};

const FileItem = ({ type, children, focus }) => (
  <div className="flex w-[124.5px] shrink-0 flex-col items-center">
    <svg viewBox="0 0 32 38" className="h-[34px] w-[29px]">{files[type]}</svg>
    <div className={`mt-[1px] whitespace-pre text-center text-[13px] leading-[19px] text-[#232629] ${focus ? "border-b border-[#3daee9] px-[3px] pb-[1px]" : ""}`}>
      {children}
    </div>
  </div>
);

const Crumb = () => (
  <svg viewBox="0 0 8 12" className="h-[11px] w-[7px] shrink-0" fill="none" stroke="#232629" strokeWidth="1">
    <path d="M1 1l5 5-5 5" />
  </svg>
);

const Dolphin = () => (
  <div className="absolute left-[314px] top-[280px] flex h-[600px] w-[1000px] flex-col rounded-t-[4px] bg-[#dfe1e3] shadow-[0_0_50px_8px_rgba(0,0,0,0.45)]">
    <div className="flex h-[26px] shrink-0 items-center pl-[4px] pt-[2px]">
      <svg viewBox="0 0 20 18" className="h-[16px] w-[18px]">
        <path d="M1 1h7l2 2h9v14H1z" fill="#2a83c6" />
        <path d="M1 5h18v12H1z" fill="#4fb0e8" />
        <path d="M1 5h18v2H1z" fill="#cfe8f7" />
      </svg>
      <span className="ml-[9px]"><Pin /></span>
      <span className="absolute left-[452px] text-[13px] text-[#3a3d40]">ch3_3_1_атрибуты — Dolphin</span>
    </div>
    <div className="flex h-[48px] shrink-0 items-center border-b border-[#bdbfc1] pl-[15px] pt-[3px]">
      <svg viewBox="0 0 30 32" className="h-[32px] w-[30px]" fill="none" stroke="#232629" strokeWidth="1">
        <path d="M10 6 2 16l8 10" />
        <path d="M13 27l2 2 2-2" />
      </svg>
      <svg viewBox="0 0 30 32" className="h-[32px] w-[30px]" fill="none" stroke="#b4b6b8" strokeWidth="1">
        <path d="M7 6l8 10-8 10" />
        <path d="M15 27l2 2 2-2" stroke="#8b8d8f" />
      </svg>
      <div className="ml-[3px] h-[34px] w-px bg-[#b9bbbd]" />
      <div className="ml-[3px] flex h-[32px] w-[32px] items-center justify-center rounded-[3px] bg-[#c6c8ca]">
        <svg viewBox="0 0 16 16" className="h-[16px] w-[16px]" fill="#232629" stroke="#232629">
          <rect x="1" y="1" width="6" height="6" fill="none" />
          <rect x="9" y="1" width="6" height="6" />
          <rect x="1" y="9" width="6" height="6" />
          <rect x="9" y="9" width="6" height="6" fill="none" />
        </svg>
      </div>
      <div className="flex w-[35px] justify-center">
        <svg viewBox="0 0 16 16" className="h-[16px] w-[16px]" stroke="#232629" fill="none">
          <rect x="1" y="1" width="6" height="6" />
          <rect x="1" y="9" width="6" height="6" fill="#232629" />
          <path d="M9 2h6M9 5h4M9 10h6M9 13h4" />
        </svg>
      </div>
      <div className="flex w-[31px] justify-center">
        <svg viewBox="0 0 16 16" className="h-[16px] w-[16px]" stroke="#232629" fill="none">
          <rect x="1" y="1" width="6" height="6" />
          <rect x="9" y="1" width="6" height="6" />
          <rect x="9" y="9" width="6" height="6" fill="#232629" />
          <path d="M7 4h2M8 4v8h1" />
        </svg>
      </div>
      <div className="ml-[25px] flex items-center whitespace-nowrap text-[13px] text-[#232629]">
        <Crumb />
        <span className="ml-[7px]">Методичка План лесонасаждений</span>
        <span className="ml-[14px]"><Crumb /></span>
        <span className="ml-[7px]">gis_for_beginners_qgz</span>
        <span className="ml-[11px]"><Crumb /></span>
        <span className="ml-[9px] font-bold tracking-[0.2px]">ch3_3_1_атрибуты</span>
      </div>
      <div className="ml-[160px] h-[16px] w-[12px] border border-[#232629] border-t-[3px]" />
    </div>
    <div className="flex min-h-0 flex-1">
      <Sidebar />
      <div className="flex min-w-0 flex-1 flex-col">
        <TabBar />
        <div className="flex-1 rounded-tl-[3px] border-l border-t border-[#3daee9] bg-white pl-[6px] pt-[9px]">
          <div className="flex h-[82px]">
            <FileItem type="text">выдела.cpg</FileItem>
            <FileItem type="dbf">выдела.dbf</FileItem>
            <FileItem type="qgis">выдела.prj</FileItem>
            <FileItem type="text">выдела.qmd</FileItem>
            <FileItem type="qgis">выдела.shp</FileItem>
            <FileItem type="qgis">выдела.shx</FileItem>
          </div>
          <div className="flex">
            <FileItem type="xlsx" focus>{"таксационные\nописания.xlsx"}</FileItem>
            <FileItem type="qgz">ch3_3_1.qgz</FileItem>
          </div>
        </div>
      </div>
    </div>
  </div>
);

export default function App() {
  return (
    <div className="relative flex h-[822px] w-[1226px] flex-col overflow-hidden bg-[#eff0f1] font-['Noto_Sans',sans-serif] text-[#232629]">
      <div className="relative flex h-[28px] shrink-0 items-center pl-[3px]">
        <QgisLogo />
        <span className="ml-[7px]"><Pin /></span>
        <span className="absolute left-[906px] text-[13px] text-[#3a3d40]">*ch3_3_1 — QGIS</span>
      </div>
      <div className="flex h-[22px] shrink-0 items-center border-b border-[#dcdde0] pl-[9px] text-[13px]">
        {menu.map(([label, w]) => (
          <span key={label} className={`shrink-0 whitespace-nowrap ${w}`}>{label}</span>
        ))}
      </div>
      <ToolRow>{row1.map((it, i) => <ToolItem key={i} item={it} />)}</ToolRow>
      <ToolRow>{row2.map((it, i) => <ToolItem key={i} item={it} />)}</ToolRow>
      <ToolRow>
        <ToolItem item="magnet" />
        <ToolItem item="*vtree" corner />
        <div className="relative flex h-[30px] w-[32px] shrink-0 items-center justify-center rounded-[2px] border border-[#c2c4c6] bg-[#dcdddf] text-[10px] tracking-[3px] text-[#a8a8a8]">
          ∷
          <Corner />
        </div>
        <div className="ml-px flex h-[27px] w-[94px] shrink-0 items-center justify-between rounded-[2px] border border-[#c6c8ca] bg-[#f1f2f3] pl-[5px] text-[13px] text-[#a4a6a8]">
          12
          <div className="flex h-full w-[14px] flex-col items-center justify-center gap-[3px] border-l border-[#d2d4d6]">
            <div className="h-0 w-0 border-x-[4px] border-b-[4px] border-x-transparent border-b-[#b5b7b9]" />
            <div className="h-0 w-0 border-x-[4px] border-t-[4px] border-x-transparent border-t-[#b5b7b9]" />
          </div>
        </div>
        <div className="ml-px flex h-[27px] w-[115px] shrink-0 items-center justify-between rounded-[2px] border border-[#c6c8ca] bg-[#f1f2f3] pl-[5px] pr-[8px] text-[13px] text-[#a4a6a8]">
          пикс
          <div className="h-0 w-0 border-x-[4px] border-t-[4px] border-x-transparent border-t-[#b5b7b9]" />
        </div>
        <ToolItem item="trim" />
        <ToolItem item="overlap" corner />
        {row3b.map((it, i) => <ToolItem key={i} item={it} />)}
      </ToolRow>
      <div className="flex min-h-0 flex-1">
        <LayersPanel />
        <div className="flex w-[6px] shrink-0 flex-col items-center justify-center gap-[2px] bg-[#eff0f1]">
          <div className="h-[18px] w-[2px] border-l-2 border-dotted border-[#b5b7b9]" />
        </div>
        <MapCanvas />
      </div>
      <Dolphin />
    </div>
  );
}
